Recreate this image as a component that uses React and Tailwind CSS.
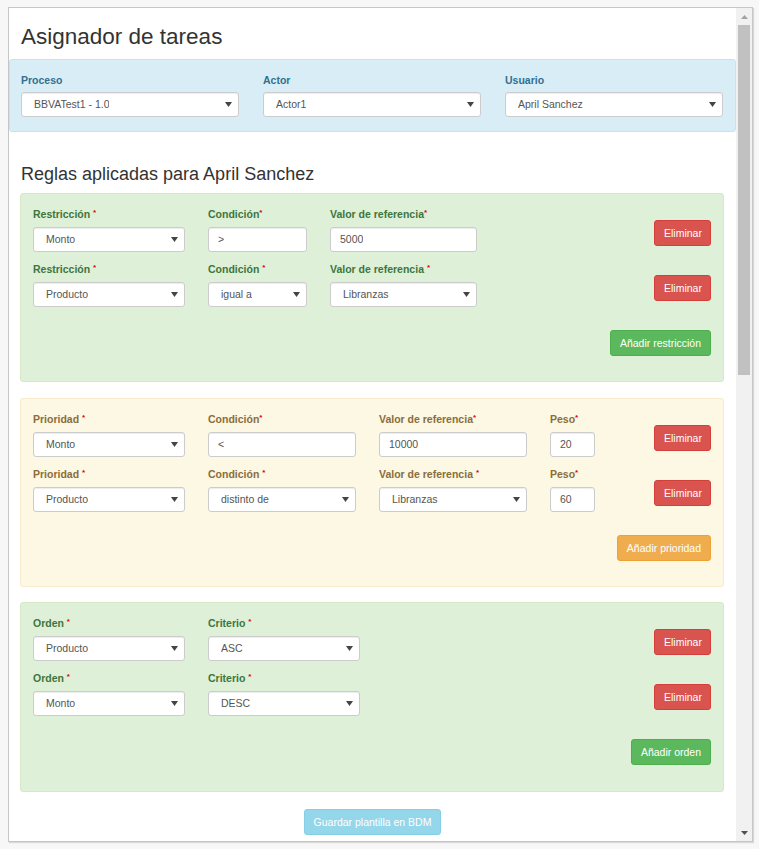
const LABEL_TONE = {
  info: 'text-[#31708f]',
  success: 'text-[#3c763d]',
  warning: 'text-[#8a6d3b]',
}

function Label({ text, tone, spaced, required = true }) {
  return (
    <div className={`text-[10.5px] font-bold leading-[15px] whitespace-nowrap ${LABEL_TONE[tone]}`}>
      {text}
      {spaced ? ' ' : ''}
      {required && <span className="inline-block align-top text-[8px] leading-[11px] text-[#d9000b]">*</span>}
    </div>
  )
}

function Caret() {
  return (
    <svg width="7" height="5" viewBox="0 0 7 5" className="shrink-0">
      <path d="M0 0h7L3.5 5z" fill="#444" />
    </svg>
  )
}

function Box({ value, select }) {
  return (
    <div
      className={`flex h-[25px] items-center justify-between rounded-[3px] border border-[#ccc] bg-white text-[10.5px] text-[#555] shadow-[inset_0_1px_1px_rgba(0,0,0,0.075)] ${
        select ? 'pl-[12px] pr-[6px]' : 'pl-[9px] pr-[6px]'
      }`}
    >
      <span className="truncate">{value}</span>
      {select && <Caret />}
    </div>
  )
}

function Field({ label, tone, spaced, required, value, select, width, gap = 'mt-[5px]' }) {
  return (
    <div className={`shrink-0 ${width}`}>
      <Label text={label} tone={tone} spaced={spaced} required={required} />
      <div className={gap}>
        <Box value={value} select={select} />
      </div>
    </div>
  )
}

function Btn({ children, variant, className = '' }) {
  const styles = {
    danger: 'bg-[#d9534f] border-[#d43f3a]',
    success: 'bg-[#5cb85c] border-[#4cae4c]',
    warning: 'bg-[#f0ad4e] border-[#eea236]',
    info: 'bg-[#94d6ea] border-[#85cfe6]',
  }
  return (
    <button
      className={`h-[26px] rounded-[3px] border px-[9px] text-[10.5px] leading-none text-white whitespace-nowrap ${styles[variant]} ${className}`}
    >
      {children}
    </button>
  )
}

function RuleRow({ fields, tone }) {
  return (
    <div className="flex items-start">
      <div className="flex gap-[23px]">
        {fields.map((f, i) => (
          <Field key={i} tone={tone} {...f} />
        ))}
      </div>
      <Btn variant="danger" className="ml-auto mt-[13px] w-[57px] px-0">
        Eliminar
      </Btn>
    </div>
  )
}

function RulePanel({ tone, rows, addLabel, addVariant, className = '' }) {
  const panel =
    tone === 'warning'
      ? 'bg-[#fcf8e3] border-[#faebcc]'
      : 'bg-[#dff0d8] border-[#d6e9c6]'
  return (
    <div className={`ml-[11px] mr-[12px] rounded-[3px] border px-[12px] pt-[13px] pb-[25px] ${panel} ${className}`}>
      <div className="flex flex-col gap-[10px]">
        {rows.map((r, i) => (
          <RuleRow key={i} fields={r} tone={tone} />
        ))}
      </div>
      <div className="mt-[23px] flex justify-end">
        <Btn variant={addVariant}>{addLabel}</Btn>
      </div>
    </div>
  )
}

const restricciones = [
  [
    { label: 'Restricción', spaced: true, value: 'Monto', select: true, width: 'w-[152px]' },
    { label: 'Condición', value: '>', width: 'w-[99px]' },
    { label: 'Valor de referencia', value: '5000', width: 'w-[147px]' },
  ],
  [
    { label: 'Restricción', spaced: true, value: 'Producto', select: true, width: 'w-[152px]' },
    { label: 'Condición', spaced: true, value: 'igual a', select: true, width: 'w-[99px]' },
    { label: 'Valor de referencia', spaced: true, value: 'Libranzas', select: true, width: 'w-[147px]' },
  ],
]

const prioridades = [
  [
    { label: 'Prioridad', spaced: true, value: 'Monto', select: true, width: 'w-[152px]' },
    { label: 'Condición', value: '<', width: 'w-[148px]' },
    { label: 'Valor de referencia', value: '10000', width: 'w-[148px]' },
    { label: 'Peso', value: '20', width: 'w-[45px]' },
  ],
  [
    { label: 'Prioridad', spaced: true, value: 'Producto', select: true, width: 'w-[152px]' },
    { label: 'Condición', spaced: true, value: 'distinto de', select: true, width: 'w-[148px]' },
    { label: 'Valor de referencia', spaced: true, value: 'Libranzas', select: true, width: 'w-[148px]' },
    { label: 'Peso', value: '60', width: 'w-[45px]' },
  ],
]

const ordenes = [
  [
    { label: 'Orden', spaced: true, value: 'Producto', select: true, width: 'w-[152px]' },
    { label: 'Criterio', spaced: true, value: 'ASC', select: true, width: 'w-[152px]' },
  ],
  [
    { label: 'Orden', spaced: true, value: 'Monto', select: true, width: 'w-[152px]' },
    { label: 'Criterio', spaced: true, value: 'DESC', select: true, width: 'w-[152px]' },
  ],
]

function Scrollbar() {
  return (
    <div className="flex w-[16px] shrink-0 flex-col bg-[#f1f1f1]">
      <div className="flex h-[17px] items-center justify-center">
        <svg width="7" height="4" viewBox="0 0 7 4">
          <path d="M0 4h7L3.5 0z" fill="#a3a3a3" />
        </svg>
      </div>
      <div className="mx-[2px] h-[350px] bg-[#c1c1c1]" />
      <div className="flex-1" />
      <div className="flex h-[17px] items-center justify-center">
        <svg width="7" height="4" viewBox="0 0 7 4">
          <path d="M0 0h7L3.5 4z" fill="#505050" />
        </svg>
      </div>
    </div>
  )
}

export default function App() {
  return (
    <div className="min-h-screen bg-[#f7f7f7] pt-[7px] pl-[8px] font-['Liberation_Sans',Arial,sans-serif] text-[#333]">
      <div className="flex h-[835px] w-[745px] overflow-hidden border border-[#c6c6c6] bg-white shadow-[1px_1px_1px_rgba(0,0,0,0.12)]">
        <div className="flex-1 overflow-hidden">
          <h1 className="pl-[12px] pt-[16px] text-[22.5px] leading-[25px] font-normal">Asignador de tareas</h1>

          <div className="mt-[10px] rounded-[3px] border border-[#bce8f1] bg-[#d9edf7] pl-[11px] pr-[12px] pt-[13px] pb-[14px]">
            <div className="flex gap-[24px]">
              <Field tone="info" label="Proceso" required={false} value="BBVATest1 - 1.0" select width="w-[218px]" gap="mt-[4px]" />
              <Field tone="info" label="Actor" required={false} value="Actor1" select width="w-[218px]" gap="mt-[4px]" />
              <Field tone="info" label="Usuario" required={false} value="April Sanchez" select width="w-[218px]" gap="mt-[4px]" />
            </div>
          </div>

          <h3 className="mt-[32px] pl-[12px] text-[18px] leading-[20px] font-normal">
            Reglas aplicadas para April Sanchez
          </h3>

          <RulePanel
            tone="success"
            rows={restricciones}
            addLabel="Añadir restricción"
            addVariant="success"
            className="mt-[9px]"
          />
          <RulePanel
            tone="warning"
            rows={prioridades}
            addLabel="Añadir prioridad"
            addVariant="warning"
            className="mt-[16px]"
          />
          <RulePanel
            tone="success"
            rows={ordenes}
            addLabel="Añadir orden"
            addVariant="success"
            className="mt-[15px] pb-[26px]"
          />

          <div className="mt-[17px] flex justify-center">
            <Btn variant="info">Guardar plantilla en BDM</Btn>
          </div>
        </div>
        <Scrollbar />
      </div>
    </div>
  )
}
